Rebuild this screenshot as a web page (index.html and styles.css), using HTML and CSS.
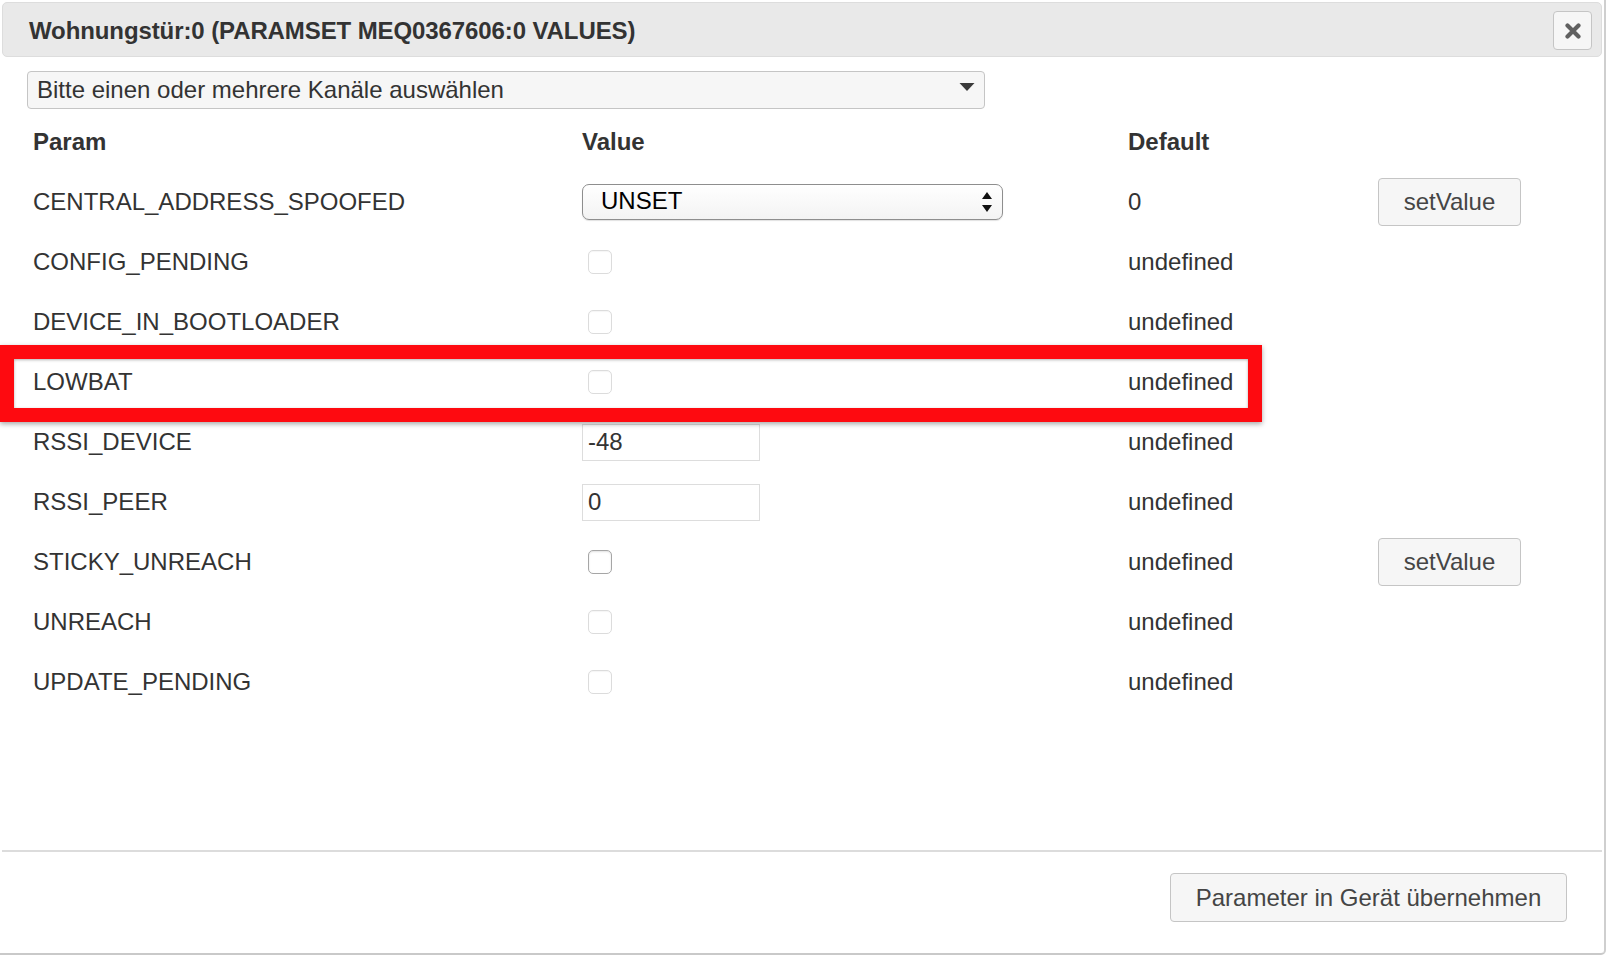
FILE: index.html
```html
<!DOCTYPE html>
<html lang="de">
<head>
<meta charset="utf-8">
<title>Wohnungstür:0 PARAMSET</title>
<link rel="stylesheet" href="styles.css">
</head>
<body>
<div class="dialog">
  <div class="titlebar">
    <span class="title">Wohnungstür:0 (PARAMSET MEQ0367606:0 VALUES)</span>
    <button class="close" type="button" aria-label="close">
      <svg width="16" height="16" viewBox="0 0 16 16"><path d="M2.5 2.5 L13.5 13.5 M13.5 2.5 L2.5 13.5" stroke="#606060" stroke-width="4.2" stroke-linecap="round"/></svg>
    </button>
  </div>

  <div class="content">
    <div class="chan-select">
      <span>Bitte einen oder mehrere Kanäle auswählen</span>
      <svg class="tri" width="16" height="10" viewBox="0 0 16 10"><path d="M0.5 1 L15.5 1 L8 9 Z" fill="#3a3a3a"/></svg>
    </div>

    <div class="params">
      <div class="th">Param</div><div class="th">Value</div><div class="th">Default</div><div></div>

      <div class="name">CENTRAL_ADDRESS_SPOOFED</div>
      <div><div class="native-select"><span>UNSET</span>
        <svg width="12" height="26" viewBox="0 0 12 26"><path d="M1 10 L11 10 L6 3 Z M1 16 L11 16 L6 23 Z" fill="#111"/></svg></div></div>
      <div>0</div>
      <div><button class="btn set" type="button">setValue</button></div>

      <div class="name">CONFIG_PENDING</div>
      <div><input class="cb" type="checkbox" disabled></div>
      <div>undefined</div><div></div>

      <div class="name">DEVICE_IN_BOOTLOADER</div>
      <div><input class="cb" type="checkbox" disabled></div>
      <div>undefined</div><div></div>

      <div class="name">LOWBAT</div>
      <div><input class="cb" type="checkbox" disabled></div>
      <div>undefined</div><div></div>

      <div class="name">RSSI_DEVICE</div>
      <div><input class="num" type="text" value="-48" readonly></div>
      <div>undefined</div><div></div>

      <div class="name">RSSI_PEER</div>
      <div><input class="num" type="text" value="0" readonly></div>
      <div>undefined</div><div></div>

      <div class="name">STICKY_UNREACH</div>
      <div><input class="cb active" type="checkbox"></div>
      <div>undefined</div>
      <div><button class="btn set" type="button">setValue</button></div>

      <div class="name">UNREACH</div>
      <div><input class="cb" type="checkbox" disabled></div>
      <div>undefined</div><div></div>

      <div class="name">UPDATE_PENDING</div>
      <div><input class="cb" type="checkbox" disabled></div>
      <div>undefined</div><div></div>
    </div>
  </div>

  <div class="footer">
    <button class="btn apply" type="button">Parameter in Gerät übernehmen</button>
  </div>

  <div class="highlight"></div>
</div>
</body>
</html>
```

FILE: styles.css
```css
html, body {
  margin: 0;
  padding: 0;
  background: #ffffff;
}

body {
  font-family: "Liberation Sans", Arial, Helvetica, sans-serif;
  font-size: 24px;
  color: #333333;
}

.dialog {
  position: relative;
  box-sizing: border-box;
  width: 1606px;
  height: 955px;
  border-right: 2px solid #cfcfcf;
  border-bottom: 2px solid #c9c9c9;
  border-bottom-right-radius: 5px;
  display: flex;
  flex-direction: column;
  background: #ffffff;
}

.titlebar {
  box-sizing: border-box;
  margin: 2px 2px 0 2px;
  height: 55px;
  background: #e9e9e9;
  border: 1px solid #dddddd;
  border-radius: 5px;
  display: flex;
  align-items: center;
  justify-content: space-between;
  padding: 0 9px 0 26px;
}

.title {
  font-weight: bold;
  color: #333333;
  letter-spacing: -0.1px;
  margin-top: 3px;
}

.close {
  box-sizing: border-box;
  width: 39px;
  height: 39px;
  margin-top: 2px;
  padding: 0;
  background: #f6f6f6;
  border: 1px solid #c5c5c5;
  border-radius: 4px;
  display: flex;
  align-items: center;
  justify-content: center;
}

.content {
  flex: 1;
  padding: 14px 0 0 27px;
}

.chan-select {
  box-sizing: border-box;
  width: 958px;
  height: 38px;
  background: #f6f6f6;
  border: 1px solid #c5c5c5;
  border-radius: 4px;
  display: flex;
  align-items: center;
  justify-content: space-between;
  padding: 0 9px 0 9px;
  color: #333333;
}

.chan-select .tri {
  margin-top: -6px;
}

.params {
  margin: 3px 0 0 6px;
  display: grid;
  grid-template-columns: 549px 546px 250px 143px;
  grid-auto-rows: 60px;
  align-items: center;
}

.th {
  font-weight: bold;
}

.native-select {
  box-sizing: border-box;
  width: 421px;
  height: 36px;
  border: 1px solid #8e8e8e;
  border-radius: 7px;
  background: linear-gradient(#ffffff, #f3f3f3);
  box-shadow: 0 1px 1px rgba(0, 0, 0, 0.12);
  display: flex;
  align-items: center;
  justify-content: space-between;
  padding: 0 9px 2px 18px;
  color: #000000;
}

.native-select svg {
  margin-top: 2px;
}

.cb {
  appearance: none;
  -webkit-appearance: none;
  box-sizing: border-box;
  display: block;
  width: 24px;
  height: 24px;
  margin: 0 0 0 6px;
  border: 1px solid #dcdcdc;
  border-radius: 5px;
  background: #ffffff;
  box-shadow: inset 0 1px 1px rgba(0, 0, 0, 0.04);
}

.cb.active {
  border-color: #a6a6a6;
  box-shadow: inset 0 1px 2px rgba(0, 0, 0, 0.12);
}

.num {
  box-sizing: border-box;
  display: block;
  width: 178px;
  height: 37px;
  margin: 0;
  padding: 0 5px;
  border: 1px solid #dddddd;
  background: #ffffff;
  font-family: inherit;
  font-size: 24px;
  color: #333333;
  outline: none;
}

.btn {
  box-sizing: border-box;
  font-family: inherit;
  font-size: 24px;
  color: #454545;
  background: #f6f6f6;
  border: 1px solid #c5c5c5;
  border-radius: 4px;
  padding: 0;
}

.set {
  display: block;
  width: 143px;
  height: 48px;
}

.footer {
  box-sizing: border-box;
  height: 103px;
  margin: 0 2px;
  border-top: 2px solid #dcdcdc;
  padding: 21px 35px 0 0;
  display: flex;
  justify-content: flex-end;
  align-items: flex-start;
}

.apply {
  width: 397px;
  height: 49px;
}

.highlight {
  position: absolute;
  left: 0;
  top: 345px;
  box-sizing: border-box;
  width: 1262px;
  height: 77px;
  border: 14px solid #fe0a10;
  box-shadow: 0 2px 5px rgba(0, 0, 0, 0.35), inset 0 1px 3px rgba(0, 0, 0, 0.3);
}
```
